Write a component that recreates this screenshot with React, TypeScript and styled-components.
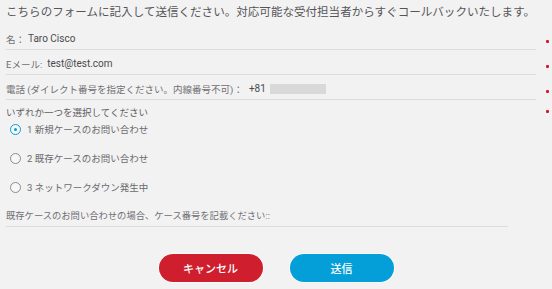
import React from "react";
import styled, { createGlobalStyle } from "styled-components";

const Global = createGlobalStyle`
  html, body { margin: 0; padding: 0; background: #f2f2f2; }
  body { font-family: Roboto, "Noto Sans CJK JP", sans-serif; }
`;

const Page = styled.div`
  width: 552px;
  height: 289px;
  box-sizing: border-box;
  padding-left: 6px;
  background: #f2f2f2;
  overflow: hidden;
  display: flex;
  flex-direction: column;
`;

const Title = styled.div`
  height: 25px;
  padding-top: 2px;
  box-sizing: border-box;
  font-size: 11.55px;
  line-height: 20px;
  color: #555558;
  white-space: nowrap;
`;

const FieldRow = styled.div`
  display: flex;
  height: 25px;
`;

const Field = styled.div`
  width: 530px;
  box-sizing: border-box;
  border-bottom: 1px solid #dcdcdc;
  padding-top: 3px;
  display: flex;
  align-items: center;
  white-space: nowrap;
`;

const Marker = styled.div<{ $top: number }>`
  width: 16px;
  padding-top: ${(p) => p.$top}px;
  box-sizing: border-box;
  display: flex;
  align-items: flex-start;
`;

const Dot = styled.span`
  display: block;
  width: 3px;
  height: 3px;
  margin-left: 10px;
  background: #d21b2f;
  border-radius: 1px;
`;

const Label = styled.span`
  font-size: 9.5px;
  color: #6f6f72;
`;

const Value = styled.span<{ $gap?: number }>`
  font-size: 10px;
  color: #4a4a4d;
  margin-left: ${(p) => p.$gap ?? 3}px;
`;

const Redacted = styled.span`
  display: inline-block;
  width: 56px;
  height: 10px;
  background: #d9d9d9;
  margin-left: 4px;
`;

const GroupHead = styled.div`
  display: flex;
  justify-content: space-between;
  margin-top: 6px;
  height: 14px;
`;

const GroupLabel = styled.div`
  font-size: 9.5px;
  line-height: 14px;
  color: #5f5f62;
  white-space: nowrap;
`;

const RadioList = styled.div`
  display: flex;
  flex-direction: column;
  gap: 11px;
  padding-left: 4px;
`;

const RadioRow = styled.label`
  display: flex;
  align-items: center;
  height: 18px;
  gap: 6px;
`;

const RadioCircle = styled.span<{ $checked?: boolean }>`
  width: 11px;
  height: 11px;
  box-sizing: border-box;
  border-radius: 50%;
  border: 1.5px solid ${(p) => (p.$checked ? "#049fd9" : "#8c8c8f")};
  background: #f7f7f7;
  display: flex;
  align-items: center;
  justify-content: center;
  &::after {
    content: "";
    display: ${(p) => (p.$checked ? "block" : "none")};
    width: 3px;
    height: 3px;
    border-radius: 50%;
    background: #049fd9;
  }
`;

const RadioText = styled.span`
  font-size: 9.5px;
  color: #6a6a6d;
  white-space: nowrap;
`;

const CaseField = styled.div`
  width: 502px;
  height: 23px;
  margin-top: 8px;
  box-sizing: border-box;
  border-bottom: 1px solid #dcdcdc;
  display: flex;
  align-items: center;
  font-size: 9.3px;
  color: #6f6f72;
  white-space: nowrap;
`;

const Buttons = styled.div`
  display: flex;
  justify-content: center;
  gap: 27px;
  margin-top: 27px;
  margin-left: -6px;
`;

const Btn = styled.button<{ $variant: "cancel" | "send" }>`
  width: 104px;
  height: 28px;
  border-radius: 14px;
  border: none;
  box-shadow: 0 0 0 1px rgba(255, 255, 255, 0.7);
  background: ${(p) => (p.$variant === "cancel" ? "#cf1f2f" : "#049fd9")};
  color: #fff;
  font-family: Roboto, "Noto Sans CJK JP", sans-serif;
  font-size: 11px;
  font-weight: 500;
  padding: 0;
  cursor: pointer;
`;

export default function App() {
  return (
    <>
      <Global />
      <Page>
        <Title>
          こちらのフォームに記入して送信ください。対応可能な受付担当者からすぐコールバックいたします。
        </Title>
        <FieldRow>
          <Field>
            <Label>名：</Label>
            <Value>Taro Cisco</Value>
          </Field>
          <Marker $top={15}>
            <Dot />
          </Marker>
        </FieldRow>
        <FieldRow>
          <Field>
            <Label>Eメール:</Label>
            <Value $gap={5}>test@test.com</Value>
          </Field>
          <Marker $top={15}>
            <Dot />
          </Marker>
        </FieldRow>
        <FieldRow>
          <Field>
            <Label>電話 (ダイレクト番号を指定ください。内線番号不可)：</Label>
            <Value $gap={6}>+81</Value>
            <Redacted />
          </Field>
          <Marker $top={15}>
            <Dot />
          </Marker>
        </FieldRow>
        <GroupHead>
          <GroupLabel>いずれか一つを選択してください</GroupLabel>
          <Marker $top={4}>
            <Dot />
          </Marker>
        </GroupHead>
        <RadioList>
          <RadioRow>
            <RadioCircle $checked />
            <RadioText>1 新規ケースのお問い合わせ</RadioText>
          </RadioRow>
          <RadioRow>
            <RadioCircle />
            <RadioText>2 既存ケースのお問い合わせ</RadioText>
          </RadioRow>
          <RadioRow>
            <RadioCircle />
            <RadioText>3 ネットワークダウン発生中</RadioText>
          </RadioRow>
        </RadioList>
        <CaseField>既存ケースのお問い合わせの場合、ケース番号を記載ください::</CaseField>
        <Buttons>
          <Btn $variant="cancel">キャンセル</Btn>
          <Btn $variant="send">送信</Btn>
        </Buttons>
      </Page>
    </>
  );
}
